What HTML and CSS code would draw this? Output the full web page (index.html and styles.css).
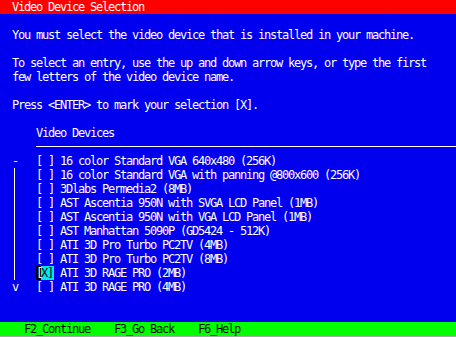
FILE: index.html
```html
<!DOCTYPE html>
<html lang="en">

<head>
    <meta charset="UTF-8">
    <meta name="viewport" content="width=device-width, initial-scale=1.0">
    <title>Video Device Selection</title>
    <link rel="stylesheet" href="styles.css">
</head>

<body>

    <div class="screen">
        <header class="title-bar">Video Device Selection</header>

        <div class="content">
            <p class="para">You must select the video device that is installed in your machine.</p>

            <p class="para">To select an entry, use the up and down arrow keys, or type the first<br>few letters of the video device name.</p>

            <p class="para">Press &lt;ENTER&gt; to mark your selection [X].</p>

            <div class="list-title">Video Devices</div>
            <div class="rule"></div>

            <div class="list">
                <div class="scrollbar">
                    <span class="scroll-top">-</span>
                    <span class="scroll-track"></span>
                    <span class="scroll-end">v</span>
                </div>

                <ul class="devices">
                    <li class="device"><span class="check">[ ]</span>16 color Standard VGA 640x480 (256K)</li>
                    <li class="device"><span class="check">[ ]</span>16 color Standard VGA with panning @800x600 (256K)</li>
                    <li class="device"><span class="check">[ ]</span>3Dlabs Permedia2 (8MB)</li>
                    <li class="device"><span class="check">[ ]</span>AST Ascentia 950N with SVGA LCD Panel (1MB)</li>
                    <li class="device"><span class="check">[ ]</span>AST Ascentia 950N with VGA LCD Panel (1MB)</li>
                    <li class="device"><span class="check">[ ]</span>AST Manhattan 5090P (GD5424 - 512K)</li>
                    <li class="device"><span class="check">[ ]</span>ATI 3D Pro Turbo PC2TV (4MB)</li>
                    <li class="device"><span class="check">[ ]</span>ATI 3D Pro Turbo PC2TV (8MB)</li>
                    <li class="device selected"><span class="check"><span class="cursor">[</span>X]</span>ATI 3D RAGE PRO (2MB)</li>
                    <li class="device"><span class="check">[ ]</span>ATI 3D RAGE PRO (4MB)</li>
                </ul>
            </div>
        </div>

        <footer class="keys">    F2_Continue    F3_Go Back    F6_Help</footer>
    </div>

</body>

</html>
```

FILE: styles.css
```css
body {
    margin: 0;
    padding: 0;
    background-color: #fff;
}

/* one text cell = 6px wide, 14px tall */
.screen {
    width: 456px;
    height: 336px;
    display: flex;
    flex-direction: column;
    background-color: #0000ee;
    color: #fff;
    font-family: 'DejaVu Sans Mono', monospace;
    font-size: 12px;
    letter-spacing: -1.2246px;
    line-height: 14px;
    border-bottom: 1px solid #a8a8a8;
}

.title-bar {
    height: 14px;
    padding-left: 12px;
    background-color: #ff0000;
    color: #fff;
}

.content {
    flex: 1;
}

.para {
    margin: 14px 0 0 0;
    padding-left: 12px;
    white-space: pre;
}

.list-title {
    margin-top: 14px;
    padding-left: 36px;
    height: 14px;
}

.rule {
    margin: 6px 0 7px 36px;
    border-top: 1px solid #fff;
}

.list {
    display: flex;
}

.scrollbar {
    display: flex;
    flex-direction: column;
    width: 6px;
    margin-left: 12px;
}

.scroll-top,
.scroll-end {
    height: 14px;
}

.scroll-track {
    flex: 1;
    margin-left: 2px;
    border-left: 1px solid #fff;
}

.devices {
    list-style: none;
    margin: 0 0 0 18px;
    padding: 0;
}

.device {
    height: 14px;
    white-space: pre;
}

.check {
    display: inline-block;
    width: 18px;
    margin-right: 6px;
}

.selected .check {
    background-color: #00e8f0;
    color: #000;
}

.cursor {
    display: inline-block;
    width: 5px;
    background-color: #000;
    color: #fff;
}

.keys {
    height: 14px;
    background-color: #00ff00;
    color: #000;
    white-space: pre;
}
```
